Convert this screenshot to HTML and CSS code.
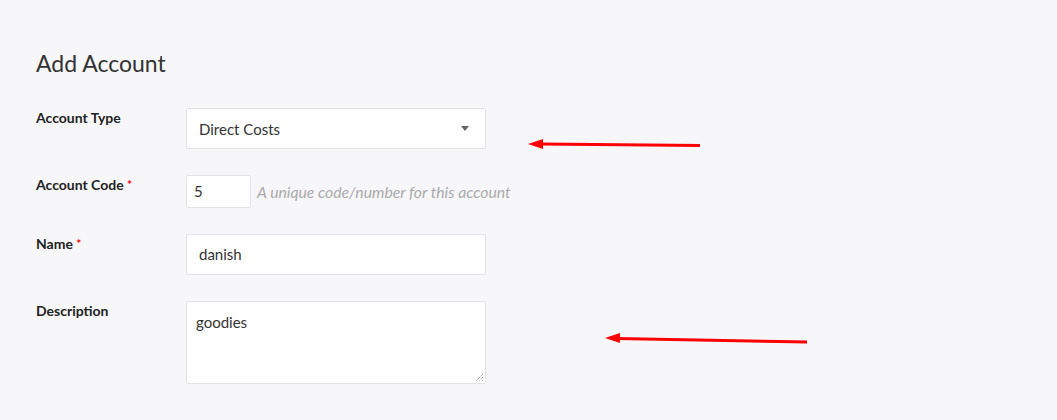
FILE: index.html
```html
<!DOCTYPE html>
<html>
<head>
<meta charset="utf-8">
<link rel="stylesheet" href="styles.css">
</head>
<body>
<div class="page">
  <h1 class="title">Add Account</h1>
  <form class="form">
    <div class="row">
      <label class="label">Account Type</label>
      <div class="field">
        <div class="select">
          <span>Direct Costs</span>
          <span class="caret"></span>
        </div>
      </div>
    </div>
    <div class="row">
      <label class="label">Account Code <span class="req">*</span></label>
      <div class="field inline">
        <div class="input short">5</div>
        <span class="help">A unique code/number for this account</span>
      </div>
    </div>
    <div class="row">
      <label class="label">Name <span class="req">*</span></label>
      <div class="field">
        <div class="input">danish</div>
      </div>
    </div>
    <div class="row">
      <label class="label">Description</label>
      <div class="field">
        <div class="textarea">goodies
          <svg class="grip" width="10" height="10" viewBox="0 0 10 10"><path d="M9 2L2 9M9 5L5 9M9 8L8 9" stroke="#777" stroke-width="1" stroke-dasharray="1 1" fill="none"/></svg>
        </div>
      </div>
    </div>
  </form>
  <svg class="arrow a1" width="1057" height="420" viewBox="0 0 1057 420">
    <line x1="700" y1="145.5" x2="540" y2="144" stroke="#ff0000" stroke-width="3"/>
    <polygon points="528,144 543,139 543,149" fill="#ff0000"/>
    <line x1="807" y1="342" x2="617" y2="338.5" stroke="#ff0000" stroke-width="3"/>
    <polygon points="605,338 620,333 620,343" fill="#ff0000"/>
  </svg>
</div>
</body>
</html>
```
FILE: styles.css
```css
html, body {
  margin: 0;
  padding: 0;
  background: #f7f7f9;
}
.page {
  position: relative;
  width: 1057px;
  height: 420px;
  padding: 0 36px;
  box-sizing: border-box;
  font-family: Lato, "Open Sans", sans-serif;
  color: #333;
}
.title {
  margin: 0;
  padding-top: 49px;
  font-size: 23px;
  font-weight: 400;
  line-height: 29px;
  color: #333;
  height: 59px;
}
.form {
  display: flex;
  flex-direction: column;
  gap: 26px;
}
.row {
  display: flex;
  align-items: flex-start;
}
.label {
  width: 150px;
  font-size: 14px;
  font-weight: 700;
  line-height: 20px;
  color: #222;
}
.req {
  color: #e00;
  font-size: 12px;
  vertical-align: top;
}
.field {
  width: 300px;
}
.field.inline {
  display: flex;
  align-items: center;
  width: auto;
  gap: 6px;
}
.select, .input, .textarea {
  background: #fff;
  border: 1px solid #e3e3e6;
  border-radius: 2px;
  box-sizing: border-box;
  font-size: 15px;
  color: #333;
}
.select {
  height: 41px;
  display: flex;
  align-items: center;
  justify-content: space-between;
  padding: 0 16px 0 12px;
}
.caret {
  width: 0;
  height: 0;
  border-left: 4px solid transparent;
  border-right: 4px solid transparent;
  border-top: 5px solid #666;
}
.input {
  height: 41px;
  line-height: 39px;
  padding: 0 12px;
}
.input.short {
  width: 65px;
  height: 33px;
  line-height: 31px;
  padding: 0 7px;
}
.help {
  font-size: 15.75px;
  font-style: italic;
  color: #aaa;
}
.textarea {
  position: relative;
  height: 83px;
  padding: 10px 9px;
  line-height: 20px;
}
.grip {
  position: absolute;
  right: 1px;
  bottom: 1px;
}
.arrow {
  position: absolute;
  left: 0;
  top: 0;
  pointer-events: none;
}
```
